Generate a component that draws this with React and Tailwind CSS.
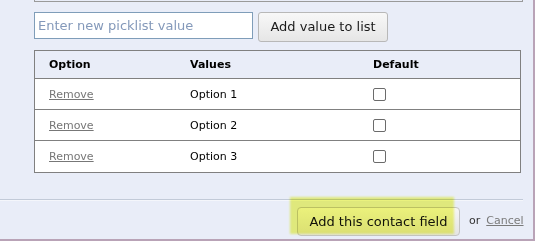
import { useState } from 'react'

const options = ['Option 1', 'Option 2', 'Option 3']

export default function App() {
  const [value, setValue] = useState('')

  return (
    <div className="w-[538px] h-[250px] bg-white" style={{ fontFamily: '"DejaVu Sans", Verdana, sans-serif' }}>
      <div className="w-[535px] h-[241px] bg-[#e9edf8] border-r-[2px] border-b-[2px] border-[#b9a3b7]">
        {/* end of the box above */}
        <div className="ml-[34px] w-[489px] h-[2px] border-x border-b border-[#9a9a9a]" />

        <div className="flex items-start ml-[34px] mt-[10px]">
          <input
            value={value}
            onChange={e => setValue(e.target.value)}
            placeholder="Enter new picklist value"
            className="w-[219px] h-[27px] px-[3px] bg-white border border-[#7f9db9] text-[13px] text-[#333] placeholder:text-[#8499ba] outline-none"
          />
          <button className="ml-[5px] w-[130px] h-[30px] rounded-[3px] border border-[#b8b8b8] bg-gradient-to-b from-[#f8f8f8] to-[#e6e6e6] text-[13px] text-[#1a1a1a]">
            Add value to list
          </button>
        </div>

        <div className="ml-[34px] mt-[8px] w-[487px] border border-[#808080] text-[11px]">
          <div className="flex items-center h-[28px] pt-[2px] font-bold text-black border-b border-[#808080]">
            <div className="w-[155px] pl-[14px]">Option</div>
            <div className="w-[183px]">Values</div>
            <div>Default</div>
          </div>
          {options.map((opt, i) => (
            <div key={opt} className={'flex items-center h-[31px] pt-[2px] bg-white text-black' + (i < options.length - 1 ? ' border-b border-[#808080]' : '')}>
              <div className="w-[155px] pl-[14px]">
                <a href="#" className="text-[#777] underline">Remove</a>
              </div>
              <div className="w-[183px]">{opt}</div>
              <div>
                <span className="block w-[13px] h-[13px] -mt-[2px] rounded-[2px] border border-[#6b6b6b] bg-white" />
              </div>
            </div>
          ))}
        </div>

        <div className="mt-[26px] w-[523px] h-[2px] border-t border-[#c2cad8] border-b border-b-[#f4f6fb]" />

        <div className="relative flex items-center h-[37px] pl-[297px]">
          <button className="w-[163px] h-[29px] mt-[4px] rounded-[4px] border border-[#c4c4c4] bg-gradient-to-b from-[#f6f6f6] to-[#e4e4e4] text-[13px] text-[#111]">
            Add this contact field
          </button>
          <span className="ml-[9px] mt-[4px] text-[11px] text-[#333]">or</span>
          <a href="#" className="ml-[6px] mt-[4px] text-[11px] text-[#7a7a7a] underline">Cancel</a>
          {/* highlighter mark */}
          <div className="absolute left-[290px] top-[-4px] w-[164px] h-[37px] bg-[#f4fa80] mix-blend-multiply blur-[1px] pointer-events-none" />
        </div>
      </div>
    </div>
  )
}
